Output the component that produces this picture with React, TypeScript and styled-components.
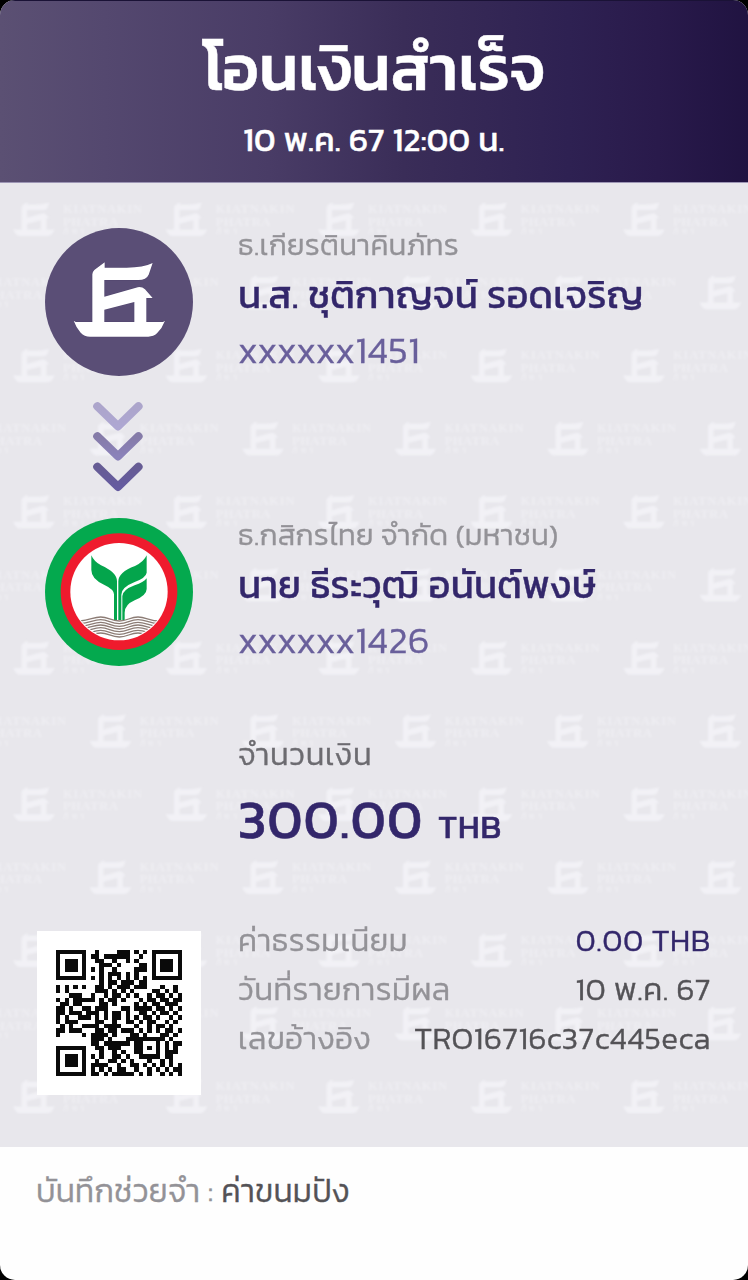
import React from "react";
import styled, { createGlobalStyle } from "styled-components";

const Global = createGlobalStyle`
  * { box-sizing: border-box; }
  body {
    margin: 0;
    background: #000;
    font-family: Kanit, "Noto Sans Thai", "Noto Sans", sans-serif;
    font-weight: 300;
  }
`;

const Slip = styled.main`
  width: 748px;
  height: 1280px;
  display: flex;
  flex-direction: column;
  overflow: hidden;
  border-radius: 15px;
  background: #fefefe;
`;

const Header = styled.header`
  height: 183px;
  padding-top: 27px;
  display: flex;
  flex-direction: column;
  align-items: center;
  gap: 12px;
  color: #fff;
  border-top: 1px solid #1a1236;
  border-bottom: 1px solid #9d96b5;
  background: linear-gradient(90deg, #5b5073 0%, #54486f 14%, #493c66 36%, #3a2d58 54%, #2e2152 76%, #291a4b 88%, #201341 100%);
`;

const Title = styled.h1`
  margin: 0;
  font-size: 63.5px;
  font-weight: 500;
  line-height: 80px;
  -webkit-text-stroke: 0.5px currentColor;
`;

const Timestamp = styled.div`
  font-size: 33px;
  font-weight: 400;
  line-height: 40px;
  letter-spacing: 0.3px;
  -webkit-text-stroke: 0.5px currentColor;
`;

const Body = styled.section`
  position: relative;
  height: 964px;
  padding: 42px 38px 0 45px;
  background: #e8e7ec;
`;

const Watermark = styled.svg`
  position: absolute;
  inset: 0;
  width: 100%;
  height: 100%;
`;

const Content = styled.div`
  position: relative;
  display: flex;
  flex-direction: column;
`;

const Party = styled.div`
  display: flex;
  gap: 45px;
  height: 151px;
`;

const Avatar = styled.svg`
  width: 148px;
  height: 148px;
  margin-top: 3px;
  flex: none;
`;

const Arrows = styled.svg`
  display: block;
  width: 60px;
  height: 96px;
  margin: 24px 0 19px 43px;
`;

const Bank = styled.div`
  font-size: 29.6px;
  line-height: 39px;
  letter-spacing: 0.28px;
  color: #939297;
  white-space: nowrap;
  -webkit-text-stroke: 0.4px currentColor;
`;

const Name = styled.div`
  margin: 3px 0 3px;
  font-size: 38px;
  font-weight: 400;
  line-height: 55px;
  letter-spacing: 0.28px;
  color: #33276b;
  white-space: nowrap;
  -webkit-text-stroke: 0.4px currentColor;
`;

const Account = styled.div`
  font-size: 37.4px;
  line-height: 51px;
  letter-spacing: 0.6px;
  color: #695f9b;
  -webkit-text-stroke: 0.4px currentColor;
`;

const Amount = styled.div`
  margin: 68px 0 0 193px;
`;

const AmountLabel = styled.div`
  font-size: 31px;
  line-height: 40px;
  letter-spacing: 0.75px;
  color: #6c6b70;
  -webkit-text-stroke: 0.4px currentColor;
`;

const AmountValue = styled.div`
  display: flex;
  align-items: baseline;
  gap: 15px;
  margin-top: 4px;
  font-size: 54.3px;
  font-weight: 400;
  line-height: 81px;
  letter-spacing: 1px;
  color: #33276b;
  -webkit-text-stroke: 0.6px currentColor;
`;

const Currency = styled.span`
  font-size: 33px;
  letter-spacing: 0.9px;
`;

const Summary = styled.div`
  display: flex;
  gap: 37px;
  margin: 49px 0 0 -8px;
`;

const QrBox = styled.div`
  flex: none;
  width: 164px;
  height: 164px;
  margin-top: 15px;
  padding: 19px;
  background: #fff;
`;

const QrSvg = styled.svg`
  display: block;
  width: 126px;
  height: 126px;
`;

const Details = styled.dl`
  flex: 1;
  margin: 0 -1px 0 0;
`;

const Detail = styled.div`
  display: flex;
  justify-content: space-between;
  font-size: 31.3px;
  line-height: 49px;
  white-space: nowrap;
  letter-spacing: 0.48px;
  -webkit-text-stroke: 0.4px currentColor;
`;

const Term = styled.dt`
  color: #939297;
`;

const Value = styled.dd<{ $accent?: boolean }>`
  margin: 0;
  letter-spacing: 0.56px;
  color: ${(p) => (p.$accent ? "#33276b" : "#535256")};
`;

const Footer = styled.footer`
  flex: 1;
  padding: 23px 36px;
  font-size: 31.8px;
  line-height: 42px;
  letter-spacing: 0.3px;
  color: #939297;
  -webkit-text-stroke: 0.4px currentColor;
`;

const Note = styled.span`
  color: #535256;
`;

const KKP =
  "M131 316L137 320H187V177Q187 170 193 164L224 141V157H290Q340 157 368 143L356 178Q349 194 325 194H223V244L318 217Q334 212 345 222L368 248H349V320H399L405 316Q397 338 381 354Q371 364 355 364H180Q163 364 152 352Q138 336 131 316ZM223 283V320H313V260Z";

const QR = [
  "11111110010000111010101111111",
  "10000010110111111001001000001",
  "10111010011001001010001011101",
  "10111010001110100001101011101",
  "10111010101001000011101011101",
  "10000010001011101010001000001",
  "11111110101010101010101111111",
  "00000000001011011101100000000",
  "10101010011010111011100010010",
  "10100000011101010100001101010",
  "00011100100101101010010110101",
  "10101111101011010001011011011",
  "01101100001101000010101101110",
  "11010011011100011011110110101",
  "11011101110101101001101011010",
  "10100111010101101010110100101",
  "10111000011001001101011001010",
  "01010011110111100010010110100",
  "11011100011011011101010101101",
  "10000010111101000110100011010",
  "00000000111010001111111110100",
  "00000000110111111011000101011",
  "11111110011011100011010101010",
  "10000010001001010011000101110",
  "10111010101001101001111101100",
  "10111010010011010100010010100",
  "10111010111100100110101010101",
  "10000010101010110010010101011",
  "11111110110101111101010010101",
];

const qrPath = QR.flatMap((row, y) =>
  [...row].map((m, x) => (m === "1" ? `M${x} ${y}h1v1h-1z` : ""))
).join("");

function Pattern() {
  const mark = (x: number, y: number) => (
    <g key={`${x}-${y}`} transform={`translate(${x} ${y})`}>
      <path d={KKP} fillRule="evenodd" transform="scale(.153 .153) translate(-131 -141)" opacity=".56" />
      <g fontFamily="Liberation Serif" fontWeight="700" opacity=".36">
        <text x="50" y="11" fontSize="12.5" textLength="79">KIATNAKIN</text>
        <text x="50" y="23.5" fontSize="12.5" textLength="55">PHATRA</text>
        <text x="50" y="32" fontSize="8" textLength="21">ภัทร</text>
      </g>
    </g>
  );
  const marks = [];
  for (let row = 0; row < 13; row++) {
    const start = row % 2 ? -63 : -139.5;
    for (let col = 0; col < 6; col++) marks.push(mark(start + col * 152.5, 19 + row * 73.1));
  }
  return (
    <Watermark fill="#fafafd" aria-hidden>
      <defs>
        <filter id="soft" x="0" y="0" width="100%" height="100%">
          <feGaussianBlur stdDeviation=".9" />
        </filter>
      </defs>
      <g filter="url(#soft)">{marks}</g>
    </Watermark>
  );
}

function KkpLogo() {
  return (
    <Avatar viewBox="45 38 444 444">
      <circle cx="267" cy="260" r="222" fill="#5a4e76" />
      <path d={KKP} fill="#fff" stroke="#4c4169" strokeWidth="2" paintOrder="stroke" fillRule="evenodd" />
    </Avatar>
  );
}

function KBankLogo() {
  return (
    <Avatar viewBox="45 24 444 444">
      <defs>
        <clipPath id="disc">
          <circle cx="267" cy="245" r="143" />
        </clipPath>
      </defs>
      <circle cx="267" cy="246" r="222" fill="#04a94e" />
      <circle cx="267" cy="245" r="175" fill="#ef1b2d" />
      <circle cx="267" cy="245" r="146" fill="#fff" />
      <g fill="#04a54c">
        <path d="M184 136Q192 155 213 166Q261 187 261 214V330H252V253Q252 238 222 224Q184 207 184 180Z" />
        <path d="M350 136V188Q348 203 314 216Q274 232 274 254V330H265V214Q265 187 315 168Q341 156 350 136Z" />
        <path d="M350 205V237Q350 256 314 271Q284 284 284 308V330H277V258Q279 239 314 226Q341 217 350 205Z" />
      </g>
      <g clipPath="url(#disc)" fill="none" stroke="#8c7c75" strokeWidth="4">
        {[0, 8, 16, 24, 32, 40, 48].map((d) => (
          <path
            key={d}
            d={`M101 ${322 + d}Q122 334 150 ${333 + d}C180 ${331 + d} 190 ${321 + d} 212 ${321 + d}C236 ${321 + d} 242 ${333 + d} 268 ${333 + d}C292 ${333 + d} 300 ${321 + d} 324 ${321 + d}C348 ${321 + d} 358 ${333 + d} 390 ${333 + d}L420 ${333 + d}`}
          />
        ))}
      </g>
    </Avatar>
  );
}

const chevrons = [
  { y: 4.3, from: "#aca5cb", to: "#aea7d2" },
  { y: 34.3, from: "#857ba8", to: "#8b82ba" },
  { y: 64.8, from: "#665c94", to: "#655ba0" },
];

export default function App() {
  return (
    <>
      <Global />
      <Slip>
        <Header>
          <Title>โอนเงินสำเร็จ</Title>
          <Timestamp>10 พ.ค. 67 12:00 น.</Timestamp>
        </Header>
        <Body>
          <Pattern />
          <Content>
            <Party>
              <KkpLogo />
              <div>
                <Bank>ธ.เกียรตินาคินภัทร</Bank>
                <Name>น.ส. ชุติกาญจน์ รอดเจริญ</Name>
                <Account>xxxxxx1451</Account>
              </div>
            </Party>
            <Arrows viewBox="0 0 60 96">
              {chevrons.map((c, i) => (
                <g key={c.y}>
                  <linearGradient id={`chevron${i}`} x1="0" y1="0" x2="0" y2="1">
                    <stop offset="0" stopColor={c.from} />
                    <stop offset="1" stopColor={c.to} />
                  </linearGradient>
                  <path
                    d={`M9.3 ${c.y + 2}L30 ${c.y + 22}L50.5 ${c.y + 2}`}
                    fill="none"
                    stroke={`url(#chevron${i})`}
                    strokeWidth="8.2"
                    strokeLinecap="round"
                    strokeLinejoin="round"
                  />
                </g>
              ))}
            </Arrows>
            <Party>
              <KBankLogo />
              <div>
                <Bank>ธ.กสิกรไทย จำกัด (มหาชน)</Bank>
                <Name>นาย ธีระวุฒิ อนันต์พงษ์</Name>
                <Account>xxxxxx1426</Account>
              </div>
            </Party>
            <Amount>
              <AmountLabel>จำนวนเงิน</AmountLabel>
              <AmountValue>
                300.00 <Currency>THB</Currency>
              </AmountValue>
            </Amount>
            <Summary>
              <QrBox>
                <QrSvg viewBox="0 0 29 29" shapeRendering="crispEdges">
                  <path d={qrPath} fill="#0a0a0a" />
                </QrSvg>
              </QrBox>
              <Details>
                <Detail>
                  <Term>ค่าธรรมเนียม</Term>
                  <Value $accent>0.00 THB</Value>
                </Detail>
                <Detail>
                  <Term>วันที่รายการมีผล</Term>
                  <Value>10 พ.ค. 67</Value>
                </Detail>
                <Detail>
                  <Term>เลขอ้างอิง</Term>
                  <Value>TRO16716c37c445eca</Value>
                </Detail>
              </Details>
            </Summary>
          </Content>
        </Body>
        <Footer>
          บันทึกช่วยจำ : <Note>ค่าขนมปัง</Note>
        </Footer>
      </Slip>
    </>
  );
}
